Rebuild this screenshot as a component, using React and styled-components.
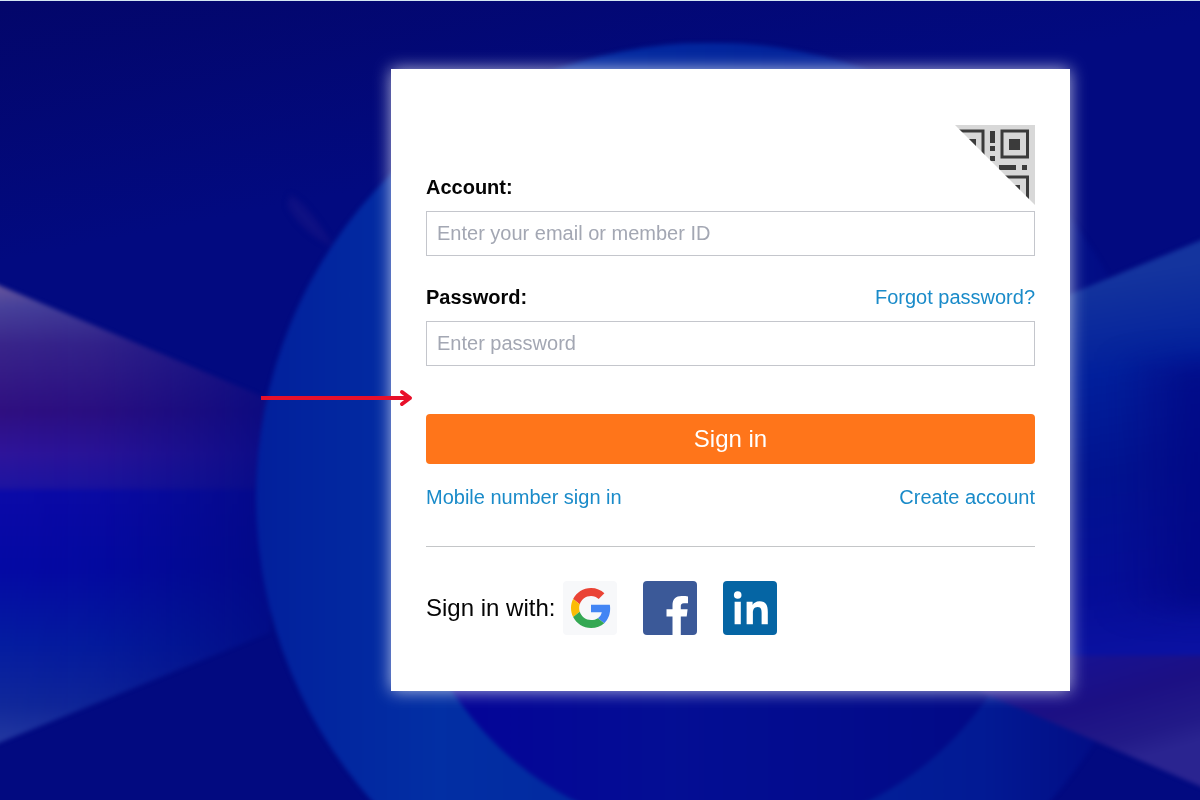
import React from "react";
import styled, { createGlobalStyle } from "styled-components";

const GlobalStyle = createGlobalStyle`
  * {
    box-sizing: border-box;
  }
  body {
    margin: 0;
    background-color: #020a7e;
    font-family: "Liberation Sans", Arial, sans-serif;
  }
`;
const Page = styled.main`
  position: relative;
  min-height: 100vh;
  display: flex;
  justify-content: flex-end;
  align-items: flex-start;
  padding: 68px 130px 68px 24px;
  border-top: 1px solid #d3e6f3;
  overflow: hidden;
`;
const Art = styled.svg`
  position: absolute;
  inset: 0;
  width: 100%;
  height: 100%;
`;
const Card = styled.section`
  position: relative;
  width: 100%;
  max-width: 679px;
  padding: 106px 35px 56px;
  background-color: white;
  box-shadow: 0 0 16px rgba(255, 255, 255, 0.7);
`;
const QrButton = styled.button`
  position: absolute;
  top: 56px;
  right: 35px;
  padding: 0;
  border: none;
  background: none;
  cursor: pointer;
  svg {
    display: block;
  }
`;
const Arrow = styled.svg`
  position: absolute;
  top: 319px;
  left: -130px;
`;
const Field = styled.div`
  display: flex;
  flex-direction: column;
  gap: 12px;
  margin-bottom: 29px;
`;
const Row = styled.div`
  display: flex;
  justify-content: space-between;
  align-items: center;
`;
const Label = styled.label`
  font-size: 20px;
  font-weight: bold;
  line-height: 24px;
  color: #050505;
`;
const Input = styled.input`
  width: 100%;
  height: 45px;
  padding: 0 10px;
  border: 1px solid #c4c6cc;
  border-radius: 0;
  background-color: white;
  font-family: inherit;
  font-size: 20px;
  color: #333;
  &::placeholder {
    color: #a3a7b3;
    opacity: 1;
  }
`;
const Link = styled.a`
  font-size: 20px;
  line-height: 24px;
  color: #1a8bc9;
  text-decoration: none;
`;
const Submit = styled.button`
  display: block;
  width: 100%;
  height: 50px;
  margin: 48px 0 21px;
  border: none;
  border-radius: 4px;
  background-color: #ff751a;
  color: white;
  font-family: inherit;
  font-size: 24px;
  cursor: pointer;
`;
const Divider = styled.hr`
  height: 1px;
  margin: 37px 0 34px;
  border: none;
  background-color: #c4c6c8;
`;
const Social = styled.div`
  display: flex;
  align-items: center;
  gap: 8px;
`;
const SocialText = styled.span`
  font-size: 24px;
  color: #050505;
`;
const SocialList = styled.div`
  display: flex;
  gap: 26px;
`;
const SocialButton = styled.button`
  width: 54px;
  height: 54px;
  padding: 0;
  border: none;
  border-radius: 4px;
  background-color: ${(props) => props.$color};
  overflow: hidden;
  cursor: pointer;
  svg {
    display: block;
  }
`;

const Background = () => (
  <Art viewBox="0 0 1200 800" preserveAspectRatio="xMidYMid slice" aria-hidden="true">
    <defs>
      <linearGradient id="base" x1="0" y1="0" x2="0.3" y2="1">
        <stop offset="0" stopColor="#03066a" />
        <stop offset="0.3" stopColor="#020a80" />
        <stop offset="1" stopColor="#020a80" />
      </linearGradient>
      <linearGradient id="ring" gradientUnits="userSpaceOnUse" x1="256" y1="0" x2="1165" y2="0">
        <stop offset="0" stopColor="#02209c" />
        <stop offset="0.2" stopColor="#022fa4" />
        <stop offset="0.55" stopColor="#02249c" />
        <stop offset="0.8" stopColor="#021a94" />
        <stop offset="0.94" stopColor="#020c84" />
        <stop offset="1" stopColor="#020a80" />
      </linearGradient>
      <linearGradient id="core" gradientUnits="userSpaceOnUse" x1="450" y1="0" x2="1000" y2="0">
        <stop offset="0" stopColor="#040498" />
        <stop offset="0.4" stopColor="#040e94" />
        <stop offset="1" stopColor="#020a86" />
      </linearGradient>
      <linearGradient id="leftTop" gradientUnits="userSpaceOnUse" x1="0" y1="285" x2="0" y2="495">
        <stop offset="0" stopColor="#66559c" />
        <stop offset="0.1" stopColor="#48429a" />
        <stop offset="0.28" stopColor="#39258a" />
        <stop offset="0.6" stopColor="#2f0f80" />
        <stop offset="0.8" stopColor="#2e149a" />
        <stop offset="0.95" stopColor="#1f14a0" />
        <stop offset="1" stopColor="#0c0aa6" />
      </linearGradient>
      <linearGradient id="leftBottom" gradientUnits="userSpaceOnUse" x1="0" y1="490" x2="0" y2="742">
        <stop offset="0" stopColor="#0b0aa8" />
        <stop offset="0.3" stopColor="#0409a4" />
        <stop offset="0.6" stopColor="#041ca0" />
        <stop offset="0.85" stopColor="#10289a" />
        <stop offset="1" stopColor="#2338a0" />
      </linearGradient>
      <linearGradient id="fadeLeft" gradientUnits="userSpaceOnUse" x1="0" y1="0" x2="275" y2="0">
        <stop offset="0" stopColor="white" />
        <stop offset="0.35" stopColor="#ddd" />
        <stop offset="0.7" stopColor="#888" />
        <stop offset="1" stopColor="#333" />
      </linearGradient>
      <mask id="leftMask" maskUnits="userSpaceOnUse" x="-10" y="250" width="300" height="520">
        <rect x="-10" y="250" width="300" height="520" fill="url(#fadeLeft)" />
      </mask>
      <linearGradient id="right" gradientUnits="userSpaceOnUse" x1="1090" y1="280" x2="1150" y2="660">
        <stop offset="0" stopColor="#14349e" />
        <stop offset="0.25" stopColor="#02209c" />
        <stop offset="0.5" stopColor="#021490" />
        <stop offset="0.8" stopColor="#060e98" />
        <stop offset="1" stopColor="#0b12a2" />
      </linearGradient>
      <linearGradient id="rightShade" gradientUnits="userSpaceOnUse" x1="1110" y1="0" x2="1200" y2="0">
        <stop offset="0" stopColor="#020684" stopOpacity="0" />
        <stop offset="1" stopColor="#020684" stopOpacity="0.8" />
      </linearGradient>
      <linearGradient id="rightBottom" gradientUnits="userSpaceOnUse" x1="1100" y1="655" x2="1130" y2="760">
        <stop offset="0" stopColor="#181290" />
        <stop offset="0.4" stopColor="#1c1084" />
        <stop offset="0.8" stopColor="#221a88" />
        <stop offset="1" stopColor="#2a2490" />
      </linearGradient>
      <filter id="soft" x="-5%" y="-5%" width="110%" height="110%" colorInterpolationFilters="sRGB">
        <feGaussianBlur stdDeviation="2" />
      </filter>
      <filter id="softer" x="-20%" y="-20%" width="140%" height="140%" colorInterpolationFilters="sRGB">
        <feGaussianBlur stdDeviation="14" />
      </filter>
    </defs>
    <rect width="1200" height="800" fill="url(#base)" />
    <g filter="url(#soft)">
      <g mask="url(#leftMask)">
        <path d="M-10 281L270 399V495H-10Z" fill="url(#leftTop)" />
        <path d="M-10 490H270V632L-10 746Z" fill="url(#leftBottom)" />
      </g>
      <path d="M290 194Q312 208 333 246Q302 232 288 206Z" fill="#151484" opacity="0.7" filter="url(#soft)" />
      <circle cx="711" cy="497" r="455" fill="url(#ring)" />
      <circle cx="722" cy="513" r="323" fill="url(#core)" />
      <path d="M1040 306L1210 236V665H1040Z" fill="url(#right)" />
      <path d="M980 655H1210V790L980 691Z" fill="url(#rightBottom)" />
    </g>
    <rect x="1110" y="360" width="110" height="250" fill="url(#rightShade)" filter="url(#softer)" />
  </Art>
);

const QrCorner = () => (
  <svg width="80" height="80" viewBox="0 0 80 80">
    <defs>
      <clipPath id="corner">
        <path d="M0 0H80V80Z" />
      </clipPath>
    </defs>
    <g clipPath="url(#corner)">
      <rect width="80" height="80" fill="#d8d8d8" />
      <g fill="none" stroke="#3b3b3b" strokeWidth="3">
        <rect x="2.5" y="6" width="25.5" height="26" />
        <rect x="47" y="6" width="25.5" height="26" />
        <rect x="47" y="52" width="25.5" height="26" />
      </g>
      <g fill="#3b3b3b">
        <rect x="10" y="14" width="11" height="11" />
        <rect x="54" y="14" width="11" height="11" />
        <rect x="54" y="60" width="11" height="11" />
        <rect x="35" y="6" width="5" height="12" />
        <rect x="35" y="21" width="5" height="5" />
        <rect x="35" y="31" width="5" height="5" />
        <rect x="44" y="40" width="17" height="5" />
        <rect x="67" y="40" width="5" height="5" />
      </g>
    </g>
  </svg>
);

const GoogleLogo = () => (
  <svg width="54" height="54" viewBox="0 0 54 54">
    <svg x="8" y="7" width="40" height="40" viewBox="0 0 48 48">
      <path fill="#ea4335" d="M24 9.5c3.54 0 6.71 1.22 9.21 3.6l6.85-6.85C35.9 2.38 30.47 0 24 0 14.62 0 6.51 5.38 2.56 13.22l7.98 6.19C12.43 13.72 17.74 9.5 24 9.5z" />
      <path fill="#4285f4" d="M46.98 24.55c0-1.57-.15-3.09-.38-4.55H24v9.02h12.94c-.58 2.96-2.26 5.48-4.78 7.18l7.73 6c4.51-4.18 7.09-10.36 7.09-17.65z" />
      <path fill="#fbbc05" d="M10.53 28.59c-.48-1.45-.76-2.99-.76-4.59s.27-3.14.76-4.59l-7.98-6.19C.92 16.46 0 20.12 0 24c0 3.88.92 7.54 2.56 10.78l7.97-6.19z" />
      <path fill="#34a853" d="M24 48c6.48 0 11.93-2.13 15.89-5.81l-7.73-6c-2.15 1.45-4.92 2.3-8.16 2.3-6.26 0-11.57-4.22-13.47-9.91l-7.98 6.19C6.51 42.62 14.62 48 24 48z" />
    </svg>
  </svg>
);

const FacebookLogo = () => (
  <svg width="54" height="54" viewBox="0 0 54 54">
    <path fill="white" d="M29.5 54V35.5H23.5V28.3H29.5V24C29.5 18 33 15 38.5 15C41.2 15 43.8 15.2 45 15.4V22.3H41C38.3 22.3 37.8 23.6 37.8 25.4V28.3H44.6L43.7 35.5H37.8V54Z" />
  </svg>
);

const LinkedinLogo = () => (
  <svg width="54" height="54" viewBox="0 0 54 54" fill="white">
    <circle cx="14.7" cy="14" r="3.8" />
    <path d="M11.6 20.8H17.8V43.3H11.6ZM23.6 20.8H29.6V23.9C30.6 22 33 20.2 36.6 20.2C43.2 20.2 44.8 24.6 44.8 30.8V43.3H38.6V32.3C38.6 29.6 38.5 26 34.7 26C30.9 26 29.9 28.9 29.9 32V43.3H23.6Z" />
  </svg>
);

const App = () => {
  return (
    <>
      <GlobalStyle />
      <Page>
        <Background />
        <Card>
          <QrButton type="button" aria-label="Sign in with QR code">
            <QrCorner />
          </QrButton>
          <form onSubmit={(e) => e.preventDefault()}>
            <Field>
              <Label htmlFor="account">Account:</Label>
              <Input id="account" type="text" placeholder="Enter your email or member ID" />
            </Field>
            <Field>
              <Row>
                <Label htmlFor="password">Password:</Label>
                <Link href="#forgot">Forgot password?</Link>
              </Row>
              <Input id="password" type="password" placeholder="Enter password" />
            </Field>
            <Submit type="submit">Sign in</Submit>
          </form>
          <Row>
            <Link href="#mobile">Mobile number sign in</Link>
            <Link href="#create">Create account</Link>
          </Row>
          <Divider />
          <Social>
            <SocialText>Sign in with:</SocialText>
            <SocialList>
              <SocialButton type="button" aria-label="Google" $color="#f7f8fa">
                <GoogleLogo />
              </SocialButton>
              <SocialButton type="button" aria-label="Facebook" $color="#3b5998">
                <FacebookLogo />
              </SocialButton>
              <SocialButton type="button" aria-label="LinkedIn" $color="#0565a4">
                <LinkedinLogo />
              </SocialButton>
            </SocialList>
          </Social>
          <Arrow width="152" height="20" viewBox="0 0 152 20" fill="none" stroke="#e8102a" strokeWidth="4" aria-hidden="true">
            <path d="M0 10H148" />
            <path d="M141 4L149 10L141 16" strokeLinecap="round" strokeLinejoin="round" />
          </Arrow>
        </Card>
      </Page>
    </>
  );
};

export default App;
